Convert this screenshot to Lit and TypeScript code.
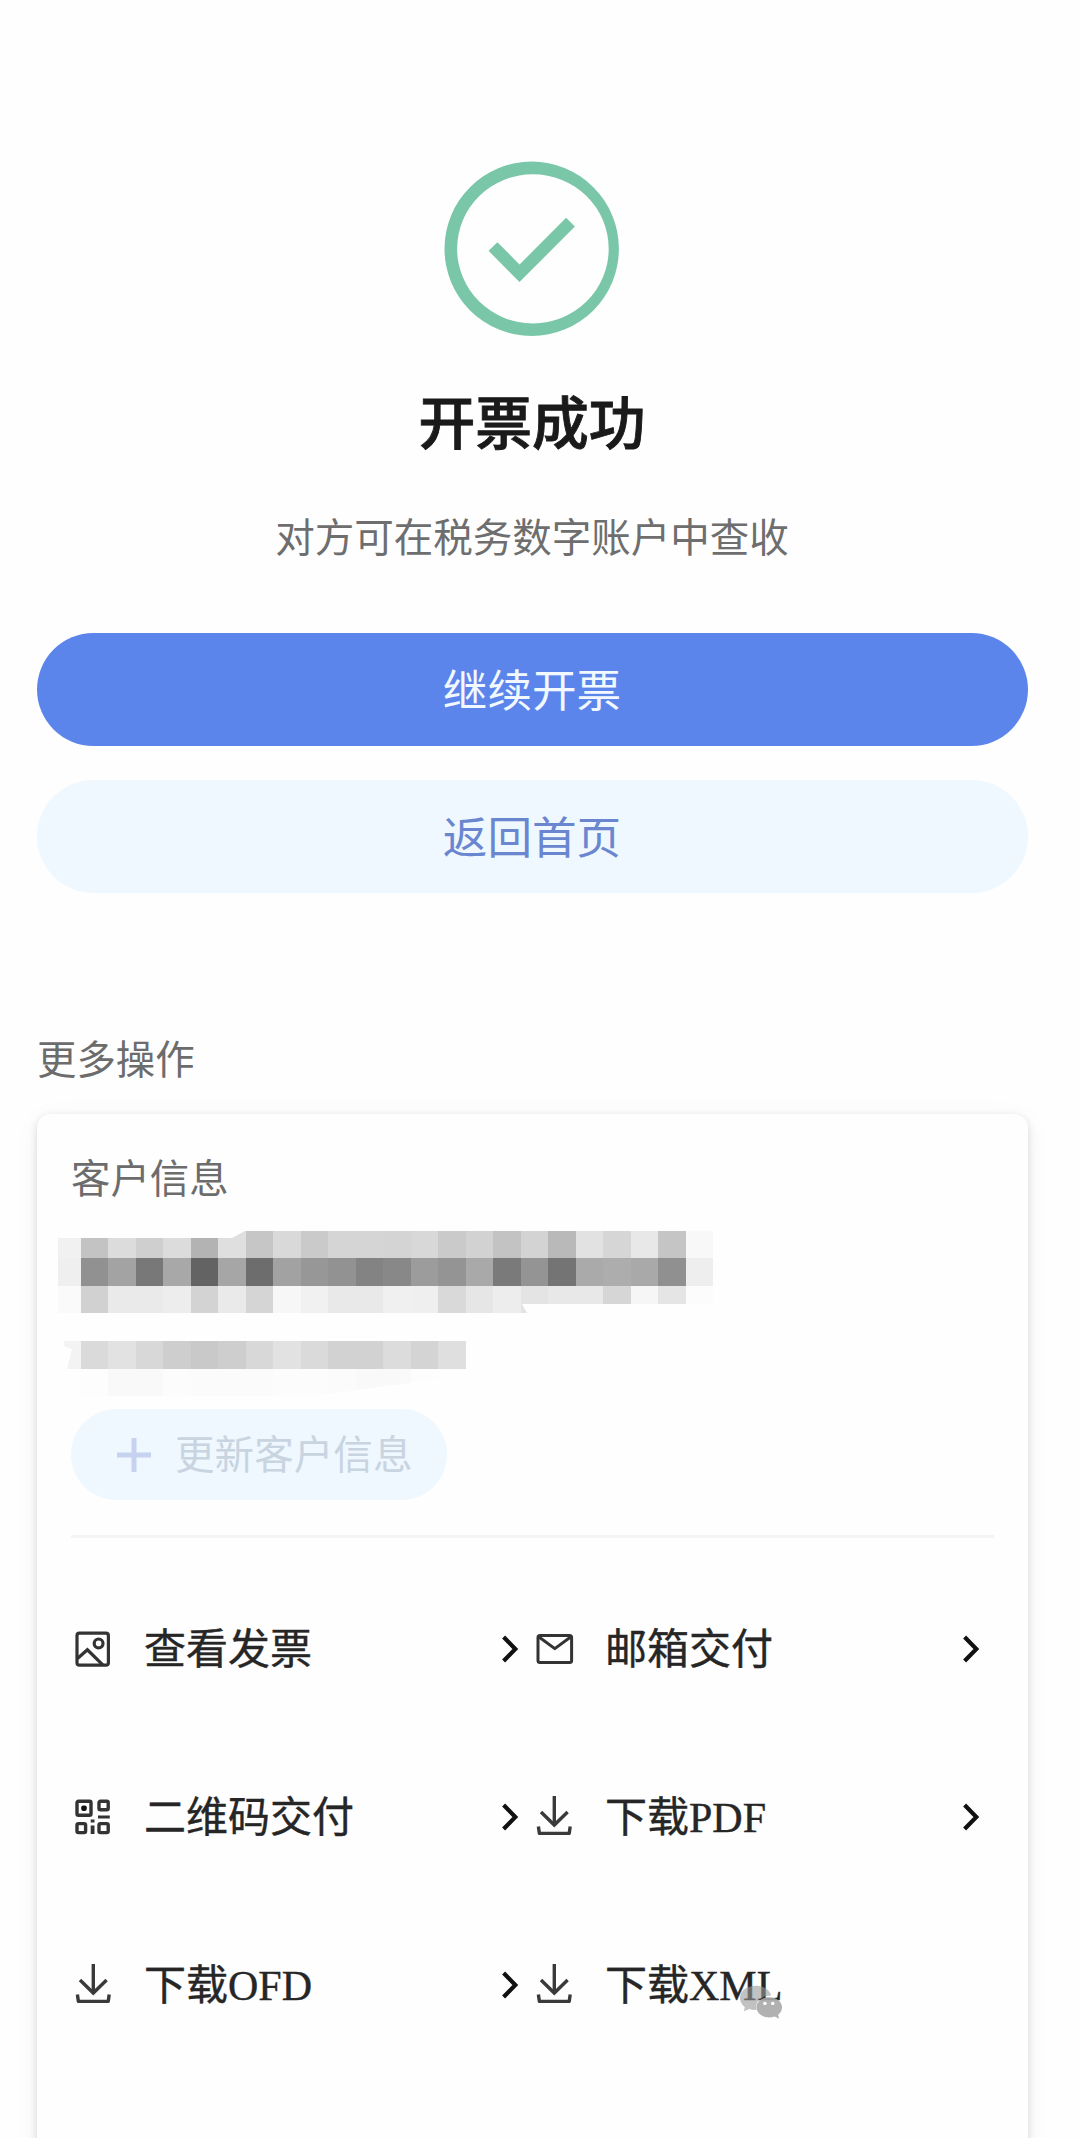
import { LitElement, html, css, svg } from "lit";
import { customElement, property } from "lit/decorators.js";

type IconName = "image" | "mail" | "qr" | "download";

const icons = {
  image: svg`
    <g fill="none" stroke="#333" stroke-width="3.2">
      <rect x="3" y="3.2" width="31.4" height="32" rx="2.5"/>
      <circle cx="24.6" cy="13.4" r="4.4"/>
      <path d="M3.5 28.5 L13.4 19.8 L29 35.2"/>
    </g>`,
  mail: svg`
    <g fill="none" stroke="#333" stroke-width="3" stroke-linejoin="round">
      <rect x="3" y="5.4" width="33.6" height="27" rx="2"/>
      <path d="M4 7 L19.8 18.6 L35.6 7"/>
    </g>`,
  qr: svg`
    <g fill="none" stroke="#333" stroke-width="3.4">
      <rect x="3" y="3.2" width="14" height="14" rx="1.5"/>
      <rect x="25" y="3.2" width="9.2" height="8.6" rx="1.5"/>
      <rect x="3" y="25.6" width="8.6" height="9" rx="1.5"/>
      <rect x="25" y="25.6" width="9.2" height="9" rx="1.5"/>
      <path d="M24 19H35.8" stroke-width="3"/>
      <path d="M18.6 21.600V24.600M18.6 27.600V36" stroke-width="3.800"/>
    </g>
    <rect x="7.2" y="7.4" width="5.6" height="5.6" rx="2.2" fill="#111"/>`,
  download: svg`
    <g fill="none" stroke="#3a3a3a" stroke-width="3.4">
      <path d="M19.3 -2V27"/>
      <path d="M6 14L19.3 27L32.600 14"/>
      <path d="M3.400 28.5L4.400 35.400H34.200L35.200 28.5" stroke-linejoin="round"/>
    </g>`,
};

@customElement("action-item")
export class ActionItem extends LitElement {
  @property() icon: IconName = "download";
  @property() label = "";
  @property({ type: Boolean }) arrow = false;

  static styles = css`
    :host {
      display: flex;
      align-items: center;
      height: 168px;
    }
    .icon {
      width: 38px;
      height: 38px;
      margin-right: 32px;
      margin-left: -1px;
      flex: none;
      overflow: visible;
    }
    .label {
      flex: 1;
      padding-top: 2px;
      font-family: "Liberation Serif", "Noto Sans CJK SC", serif;
      font-size: 42px;
      line-height: 60px;
      color: #262626;
      -webkit-text-stroke: 0.4px #262626;
      white-space: nowrap;
    }
    .arrow {
      width: 17px;
      height: 28px;
      flex: none;
    }
  `;

  render() {
    return html`
      <svg class="icon" viewBox="0 0 38 38">${icons[this.icon]}</svg>
      <span class="label">${this.label}</span>
      ${this.arrow
        ? html`<svg class="arrow" viewBox="0 0 17 28">
            <path d="M2.600 2L14.400 14L2.600 26" fill="none" stroke="#111" stroke-width="4.200"/>
          </svg>`
        : null}
    `;
  }
}

// Grey levels of the masked customer name and number, one pair of hex digits per cell.
const nameRows = [
  "f1 c3 dc cf dc b3 df c6 d9 ca d5 d5 d4 d8 ca d2 c3 d3 b9 e2 d6 e8 c5 f8",
  "ef 91 a3 78 a8 63 a6 6d a2 97 92 83 88 9c 94 a9 7a 94 74 aa ad a9 90 ee",
  "fa d1 ea ea ed d3 ea d5 f7 f1 e9 e9 f0 ef d9 e6 ed e4 e8 e8 d6 f6 e5 fc",
].map((row) => row.split(" "));
const numberRow = "f3 da e2 d8 ce c9 ce d8 e2 da d2 d2 dc d4 df".split(" ");
const faintRow = "fe fd f9 f9 fc fb fb fb fc fc fb f9 f9 fd fe".split(" ");

const CELL = 27.5;
const START = 22.5;

@customElement("masked-info")
export class MaskedInfo extends LitElement {
  static styles = css`
    :host {
      display: block;
      height: 166px;
    }
    .mask {
      display: block;
      width: 656px;
      height: 166px;
    }
  `;

  private cells(row: string[], y: number, h: number, first = 0) {
    return row.map((v, i) => {
      const x = i === 0 ? first : START + (i - 1) * CELL;
      const right = START + i * CELL;
      return svg`<rect x=${x} y=${y} width=${right - x} height=${h} fill=${`#${v}${v}${v}`}/>`;
    });
  }

  render() {
    return html`
      <svg class="mask" viewBox="0 0 656 166" shape-rendering="crispEdges">
        <defs>
          <clipPath id="edge">
            <path d="M0 7H174L187 0H656V73H464L469 82H0Z"/>
          </clipPath>
          <clipPath id="tail">
            <path d="M0 137H408L400 146L320 156L250 166H22L22 150Z"/>
          </clipPath>
        </defs>
        <g clip-path="url(#edge)">
          ${this.cells(nameRows[0], 0, 27.3)} ${this.cells(nameRows[1], 27.3, 27.5)}
          ${this.cells(nameRows[2], 54.8, 27.5)}
        </g>
        ${this.cells(numberRow, 110, 27.5, 6)}
        <path d="M5 115L14 118L9 138H5Z" fill="#fefefe"/>
        <g clip-path="url(#tail)">${this.cells(faintRow, 137.5, 27.5, 9)}</g>
      </svg>
    `;
  }
}

@customElement("app-root")
export class AppRoot extends LitElement {
  static styles = css`
    :host {
      display: block;
      font-family: "Noto Sans CJK SC", sans-serif;
    }
    .page {
      box-sizing: border-box;
      width: 1080px;
      height: 2138px;
      padding: 161px 52px 0 37px;
      overflow: hidden;
      background: #fefefe;
      display: flex;
      flex-direction: column;
    }
    .result {
      display: flex;
      flex-direction: column;
      align-items: center;
      width: 990px;
    }
    .success {
      width: 176px;
      height: 176px;
    }
    .title {
      margin: 42px 0 0;
      font-size: 56.8px;
      line-height: 80px;
      font-weight: 500;
      color: #1a1a1a;
      -webkit-text-stroke: 0.9px #1a1a1a;
    }
    .subtitle {
      margin: 48px 0 0;
      font-size: 39.5px;
      line-height: 56px;
      color: #6e6e6e;
    }
    .button {
      box-sizing: border-box;
      width: 991px;
      height: 113px;
      border: 0;
      border-radius: 57px;
      font: inherit;
      font-size: 44.6px;
      line-height: 60px;
      padding: 0 1px 4px 0;
    }
    .primary {
      margin-top: 70px;
      background: #5c85ec;
      color: #f2f8ff;
    }
    .secondary {
      margin-top: 34px;
      background: #eff8ff;
      color: #6a86cf;
    }
    .section {
      margin: 136px 0 0;
      font-size: 39.4px;
      line-height: 56px;
      font-weight: 400;
      color: #6c6c6c;
    }
    .card {
      flex: 1;
      box-sizing: border-box;
      margin: 29px 0 -40px;
      padding: 34px 34px 0;
      border-radius: 14px 14px 0 0;
      background: #fefefe;
      box-shadow: 0 3px 9px rgba(0, 0, 0, 0.14), 0 4px 28px rgba(0, 0, 0, 0.04);
    }
    .heading {
      margin: 0;
      font-size: 39.4px;
      line-height: 56px;
      font-weight: 400;
      color: #6c6c6c;
    }
    .masked {
      margin: 27px 0 0 -13px;
    }
    .update {
      box-sizing: border-box;
      width: 376px;
      height: 91px;
      margin-top: 12px;
      padding: 0 0 5px 45px;
      display: flex;
      align-items: center;
      border: 0;
      border-radius: 46px;
      background: #eff8ff;
      color: #c9d4e1;
      font: inherit;
      font-size: 39.6px;
      line-height: 56px;
      white-space: nowrap;
    }
    .plus {
      width: 36px;
      height: 36px;
      margin: 6px 23px 0 0;
      flex: none;
    }
    .divider {
      height: 3px;
      margin-top: 35px;
      background: #f4f4f4;
    }
    .actions {
      display: grid;
      grid-template-columns: 443px 443px;
      column-gap: 18px;
      margin: 27px 0 0 4px;
    }
    .last {
      position: relative;
    }
    .watermark {
      position: absolute;
      left: 203px;
      top: 83px;
      width: 45px;
      height: 37px;
    }
  `;

  render() {
    return html`
      <main class="page">
        <section class="result">
          <svg class="success" viewBox="444.500 160.500 176 176">
            <path
              fill="#7ac6a9"
              fill-rule="evenodd"
              d="M445 248.3a87.2 87.2 0 1 0 174.4 0a87.2 87.2 0 1 0 -174.4 0ZM457.6 248.3a75.8 74.6 0 1 1 151.6 0a75.8 74.6 0 1 1 -151.6 0Z"
            />
            <path d="M493.5 246L520 272.8L571 221.7" fill="none" stroke="#7ac6a9" stroke-width="12.4"/>
          </svg>
          <h1 class="title">开票成功</h1>
          <p class="subtitle">对方可在税务数字账户中查收</p>
        </section>
        <button class="button primary">继续开票</button>
        <button class="button secondary">返回首页</button>
        <h2 class="section">更多操作</h2>
        <section class="card">
          <h3 class="heading">客户信息</h3>
          <masked-info class="masked"></masked-info>
          <button class="update">
            <svg class="plus" viewBox="0 0 36 36">
              <path d="M18 1V35M1 18H35" fill="none" stroke="#c6d2f0" stroke-width="5"/>
            </svg>
            更新客户信息
          </button>
          <div class="divider"></div>
          <div class="actions">
            <action-item icon="image" label="查看发票" arrow></action-item>
            <action-item icon="mail" label="邮箱交付" arrow></action-item>
            <action-item icon="qr" label="二维码交付" arrow></action-item>
            <action-item icon="download" label="下载PDF" arrow></action-item>
            <action-item icon="download" label="下载OFD" arrow></action-item>
            <div class="last">
              <action-item icon="download" label="下载XML"></action-item>
              <svg class="watermark" viewBox="0 0 46 42" preserveAspectRatio="none">
                <path
                  fill="#999"
                  fill-opacity="0.6"
                  d="M17 2C8 2 1 8 1 16C1 20 3 24 6 26.5L5 31L10.5 28.5C13 29.5 15 29.6 18 29.4C16 20 23 13 33 13C31 6 25 2 17 2Z"
                />
                <path
                  fill="#a8a8a8"
                  fill-opacity="0.9"
                  d="M31 15C23.5 15 18 20 18 26.5C18 33 23.5 38 31 38C33 38 35 37.6 36.5 37L41 39.5L40 35C42.5 33 44 30 44 26.5C44 20 38.500 15 31 15Z"
                />
                <circle cx="26.5" cy="22" r="1.8" fill="#fff"/>
                <circle cx="34.5" cy="22" r="1.8" fill="#fff"/>
              </svg>
            </div>
          </div>
        </section>
      </main>
    `;
  }
}
